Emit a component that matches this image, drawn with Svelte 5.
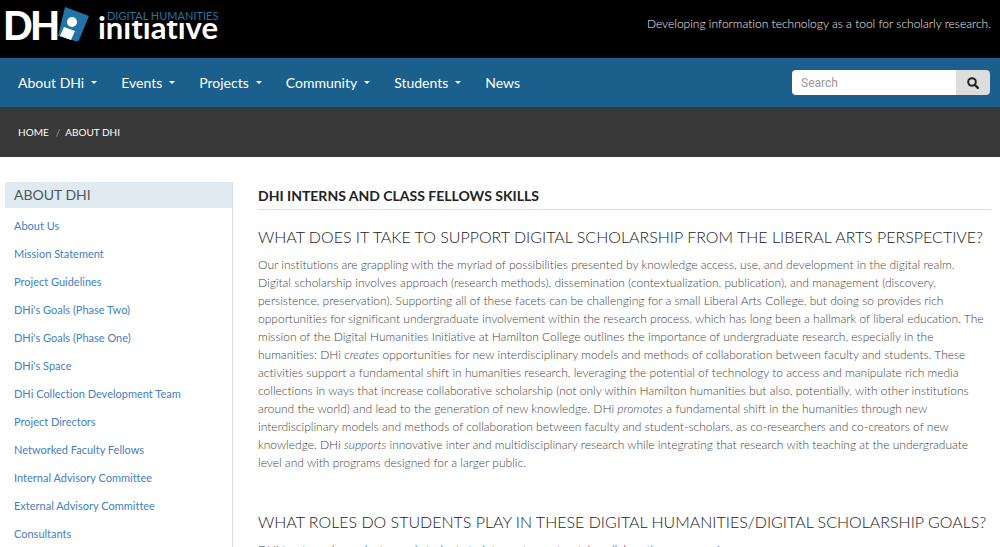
<script>
  const menu = [
    { label: 'About DHi', sub: true },
    { label: 'Events', sub: true },
    { label: 'Projects', sub: true },
    { label: 'Community', sub: true },
    { label: 'Students', sub: true },
    { label: 'News', sub: false }
  ];
  const links = [
    'About Us',
    'Mission Statement',
    'Project Guidelines',
    "DHi's Goals (Phase Two)",
    "DHi's Goals (Phase One)",
    "DHi's Space",
    'DHi Collection Development Team',
    'Project Directors',
    'Networked Faculty Fellows',
    'Internal Advisory Committee',
    'External Advisory Committee',
    'Consultants'
  ];
</script>

<header class="masthead">
  <a class="logo" href="#home" aria-label="DHi Digital Humanities Initiative">
    <svg width="224" height="48" viewBox="0 0 224 48">
      <text class="mark" x="28" y="40">H</text>
      <text class="mark front" x="1" y="40">D</text>
      <path d="M63 7 L87 16 L77 40 Q76 42 73 41 L56 36 Z" fill="#2473a8" />
      <circle cx="70" cy="22" r="5" fill="#fff" />
      <path d="M62 27 L73 31 L69 40 L58 36 Z" fill="#fff" />
      <text class="lower" x="96" y="39">initiative</text>
      <rect x="104" y="8" width="116" height="13" fill="#000" />
      <text class="upper" x="105" y="20">DIGITAL HUMANITIES</text>
    </svg>
  </a>
  <p class="tagline">Developing information technology as a tool for scholarly research.</p>
</header>

<nav class="navbar" aria-label="Main">
  <ul class="menu">
    {#each menu as item}
      <li>
        <a href="#{item.label}">{item.label}{#if item.sub}<span class="caret"></span>{/if}</a>
      </li>
    {/each}
  </ul>
  <form class="search">
    <input type="text" placeholder="Search" aria-label="Search" />
    <button type="submit" aria-label="Submit search">
      <svg width="12" height="12" viewBox="0 0 12 12" fill="none" stroke="#222">
        <circle cx="5" cy="5" r="3.8" stroke-width="2" />
        <path d="M8 8 L10.8 10.8" stroke-width="2.4" stroke-linecap="round" />
      </svg>
    </button>
  </form>
</nav>

<nav class="crumbs" aria-label="Breadcrumb">
  <a href="#home">HOME</a><span class="slash">/</span><a href="#about">ABOUT DHI</a>
</nav>

<div class="page">
  <aside>
    <h2>ABOUT DHI</h2>
    <ul>
      {#each links as link}
        <li><a href="#{link}">{link}</a></li>
      {/each}
    </ul>
  </aside>
  <main>
    <h1>DHI INTERNS AND CLASS FELLOWS SKILLS</h1>
    <h3>WHAT DOES IT TAKE TO SUPPORT DIGITAL SCHOLARSHIP FROM THE LIBERAL ARTS PERSPECTIVE?</h3>
    <p>
      Our institutions are grappling with the myriad of possibilities presented by knowledge access, use, and development in the digital realm.<br />
      Digital scholarship involves approach (research methods), dissemination (contextualization, publication), and management (discovery,<br />
      persistence, preservation). Supporting all of these facets can be challenging for a small Liberal Arts College, but doing so provides rich<br />
      opportunities for significant undergraduate involvement within the research process, which has long been a hallmark of liberal education. The<br />
      mission of the Digital Humanities Initiative at Hamilton College outlines the importance of undergraduate research, especially in the<br />
      humanities: DHi <em>creates</em> opportunities for new interdisciplinary models and methods of collaboration between faculty and students. These<br />
      activities support a fundamental shift in humanities research, leveraging the potential of technology to access and manipulate rich media<br />
      collections in ways that increase collaborative scholarship (not only within Hamilton humanities but also, potentially, with other institutions<br />
      around the world) and lead to the generation of new knowledge. DHi <em>promotes</em> a fundamental shift in the humanities through new<br />
      interdisciplinary models and methods of collaboration between faculty and student-scholars, as co-researchers and co-creators of new<br />
      knowledge. DHi <em>supports</em> innovative inter and multidisciplinary research while integrating that research with teaching at the undergraduate<br />
      level and with programs designed for a larger public.
    </p>
    <h3>WHAT ROLES DO STUDENTS PLAY IN THESE DIGITAL HUMANITIES/DIGITAL SCHOLARSHIP GOALS?</h3>
    <p>DHi trusts undergraduates and students to interpret, construct, in collaboration, an experience</p>
  </main>
</div>

<style>
  :global(body) {
    background: #fff;
    font-family: Lato, sans-serif;
    font-size: 12px;
    font-variant-ligatures: none;
  }
  :global(html) {
    overflow: hidden;
  }
  a {
    text-decoration: none;
  }
  ul {
    list-style: none;
    margin: 0;
    padding: 0;
  }
  .masthead {
    display: flex;
    justify-content: space-between;
    height: 58px;
    padding: 0 9px 0 2px;
    background: #000;
  }
  .mark {
    font: 900 39px Lato, sans-serif;
    fill: #fff;
  }
  .front {
    paint-order: stroke;
    stroke: #000;
    stroke-width: 2px;
  }
  .upper {
    font: 400 11px Lato, sans-serif;
    fill: #2473a8;
  }
  .lower {
    font: 700 31px Lato, sans-serif;
    font-variant-ligatures: none;
    fill: #fff;
  }
  .tagline {
    margin: 0;
    padding-top: 14px;
    line-height: 20px;
    font-weight: 300;
    color: #eee;
  }
  .navbar {
    display: flex;
    align-items: center;
    justify-content: space-between;
    height: 49px;
    padding: 0 10px 0 18px;
    background: #1b608c;
  }
  .menu {
    display: flex;
    gap: 24px;
  }
  .menu a {
    display: flex;
    align-items: center;
    gap: 7px;
    color: #fff;
    font-size: 14px;
    line-height: 20px;
  }
  .caret {
    border: 3px solid transparent;
    border-top: 3px solid #fff;
    border-bottom: 0;
  }
  .search {
    display: flex;
    width: 198px;
    height: 25px;
    border-radius: 4px;
    overflow: hidden;
  }
  .search input {
    flex: 1;
    min-width: 0;
    border: 0;
    padding: 0 9px;
    font: 12px Roboto, sans-serif;
    background: #fff;
  }
  .search input::placeholder {
    color: #999;
  }
  .search button {
    display: flex;
    align-items: center;
    justify-content: center;
    width: 34px;
    border: 0;
    padding: 0;
    background: #ddd;
  }
  .crumbs {
    display: flex;
    align-items: center;
    height: 50px;
    padding: 0 18px;
    background: #383838;
    font-size: 10px;
  }
  .crumbs a {
    color: #fff;
  }
  .slash {
    padding: 0 5px 0 7px;
    color: #999;
  }
  .page {
    display: flex;
    gap: 25px;
    padding: 25px 9px 0 5px;
  }
  aside {
    box-sizing: border-box;
    flex: 0 0 228px;
    border-right: 1px solid #ddd;
  }
  aside h2 {
    margin: 0;
    padding: 0 9px;
    background: #dfeaf1;
    color: #555;
    font-size: 14px;
    font-weight: 400;
    line-height: 26px;
  }
  aside ul {
    padding: 4px 9px;
  }
  aside li {
    line-height: 28px;
    font-size: 11px;
  }
  aside a {
    color: #4380c4;
  }
  main {
    flex: 1;
    min-width: 0;
  }
  h1 {
    margin: 0 0 17px;
    border-bottom: 1px solid #ddd;
    color: #222;
    font-size: 14px;
    font-weight: 700;
    line-height: 27px;
  }
  h3 {
    margin: 0 0 9px;
    color: #222;
    font-size: 16px;
    font-weight: 300;
    line-height: 20px;
  }
  main p {
    margin: 0 0 40px;
    font-weight: 300;
    line-height: 18px;
    color: #444;
  }
</style>
